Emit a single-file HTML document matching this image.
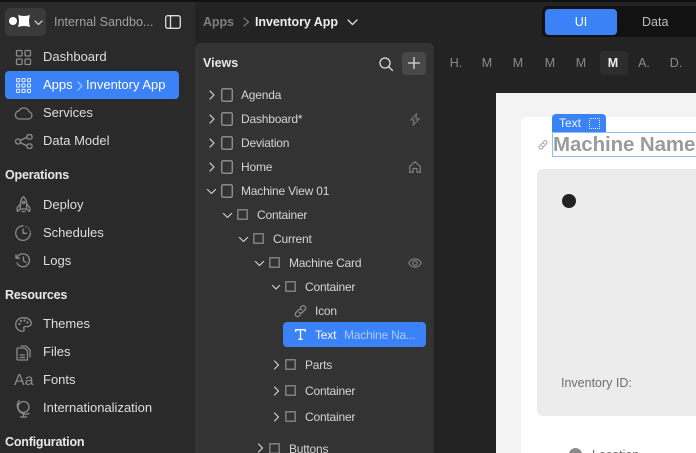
<!DOCTYPE html>
<html><head><meta charset="utf-8"><style>
*{box-sizing:border-box}
html,body{margin:0;padding:0;width:696px;height:453px;overflow:hidden;background:#232323;font-family:"Liberation Sans",sans-serif}
#w{position:absolute;left:0;top:0;width:696px;height:453px;overflow:hidden;background:#232323}
.a{position:absolute}
.t{position:absolute;white-space:nowrap;line-height:16px;font-size:13px;color:#dedede;letter-spacing:0}
.h{font-weight:bold;color:#e8e8e8;font-size:12.5px;letter-spacing:-.2px}
.v{font-size:12px;color:#d4d4d4;letter-spacing:-.2px}
svg{position:absolute;overflow:visible;fill:none;stroke-linecap:round;stroke-linejoin:round}
.i{stroke:#8b8b8b;stroke-width:1.3}
.tab{position:absolute;top:55px;width:30px;text-align:center;font-size:12.5px;line-height:16px;color:#8a8a8a}
</style></head><body><div id="w">
<div class="a" style="left:0;top:0;width:696px;height:2px;background:#111"></div>
<div class="a" style="left:0;top:2px;width:195px;height:451px;background:#2a2a2a"></div>
<div class="a" style="left:195px;top:43px;width:239px;height:410px;background:#333;border-radius:5px 5px 0 0"></div>

<!-- top left -->
<div class="a" style="left:5px;top:8px;width:41px;height:28px;background:#3a3a3a;border-radius:5px"></div>
<div class="a" style="left:9px;top:17px;width:8px;height:8px;border-radius:50%;background:#fff"></div>
<svg style="left:18px;top:15px" width="12" height="12"><path d="M0 0 Q6 2 12 0 Q10 6 12 12 Q6 10 0 12 Q2 6 0 0Z" fill="#fff"/></svg>
<svg style="left:34px;top:20px" width="9" height="6"><path d="M1 1 L4.5 4.5 L8 1" stroke="#ddd" stroke-width="1.2"/></svg>
<div class="t" style="left:54px;top:14px;color:#a0a0a0;font-size:12.5px;letter-spacing:.05px">Internal Sandbo...</div>
<svg style="left:165px;top:15px" width="16" height="14"><rect x=".7" y=".7" width="14.6" height="12.6" rx="2" stroke="#ddd" stroke-width="1.3"/><path d="M5.5 1V13" stroke="#ddd" stroke-width="1.3"/></svg>

<!-- nav -->
<svg class="i" style="left:16px;top:50px" width="15" height="15"><rect x=".5" y=".5" width="5.5" height="5.5" rx="1"/><rect x="9" y=".5" width="5.5" height="5.5" rx="1"/><rect x=".5" y="9" width="5.5" height="5.5" rx="1"/><rect x="9" y="9" width="5.5" height="5.5" rx="1"/></svg>
<div class="t" style="left:43px;top:49px">Dashboard</div>
<div class="a" style="left:5px;top:71px;width:174px;height:28px;background:#3b82f6;border-radius:4px"></div>
<svg style="left:16px;top:78px" width="15" height="15" stroke="#e8f0ff" stroke-width="1"><rect x=".5" y=".5" width="3.2" height="3.2" rx="1"/><rect x="5.9" y=".5" width="3.2" height="3.2" rx="1"/><rect x="11.3" y=".5" width="3.2" height="3.2" rx="1"/><rect x=".5" y="5.9" width="3.2" height="3.2" rx="1"/><rect x="5.9" y="5.9" width="3.2" height="3.2" rx="1"/><rect x="11.3" y="5.9" width="3.2" height="3.2" rx="1"/><rect x=".5" y="11.3" width="3.2" height="3.2" rx="1"/><rect x="5.9" y="11.3" width="3.2" height="3.2" rx="1"/><rect x="11.3" y="11.3" width="3.2" height="3.2" rx="1"/></svg>
<div class="t" style="left:43px;top:77px;color:#fff">Apps</div>
<svg style="left:77px;top:81px" width="6" height="10"><path d="M1 1 L5 5 L1 9" stroke="#a9c9fb" stroke-width="1.2"/></svg>
<div class="t" style="left:86px;top:77px;color:#fff">Inventory App</div>
<svg class="i" style="left:14px;top:106px" width="19" height="14"><path d="M4.5 13 H14.5 A3.7 3.7 0 0 0 15 5.7 A5.5 5.5 0 0 0 5 4.8 A4.2 4.2 0 0 0 4.5 13Z"/></svg>
<div class="t" style="left:43px;top:105px">Services</div>
<svg class="i" style="left:15px;top:134px" width="18" height="15"><circle cx="3" cy="7.5" r="2.5"/><rect x="12" y=".7" width="5" height="4.4" rx="1.5"/><rect x="12" y="10" width="5" height="4.4" rx="1.5"/><path d="M5.3 6.5 L12 3 M5.3 8.5 L12 12"/></svg>
<div class="t" style="left:43px;top:133px">Data Model</div>

<div class="t h" style="left:5px;top:167px">Operations</div>
<svg class="i" style="left:16px;top:196px" width="15" height="17"><path d="M7.5 .8 C4.5 3 4 7 4.3 13 H10.7 C11 7 10.5 3 7.5 .8Z"/><path d="M4.3 8 L1 12 L1.5 15.5 L4.5 13 M10.7 8 L14 12 L13.5 15.5 L10.5 13"/><circle cx="7.5" cy="6.5" r="1.1"/><path d="M6 15.5 H9"/></svg>
<div class="t" style="left:43px;top:197px">Deploy</div>
<svg class="i" style="left:15px;top:225px" width="17" height="16"><path d="M8 .8 A7.3 7.3 0 1 0 15.3 8"/><path d="M8 4 V8.3 H11.5"/><path d="M11 1.5 L11.3 1.7 M13.6 3.3 L13.8 3.6 M15 6 L15.1 6.3"/></svg>
<div class="t" style="left:43px;top:225px">Schedules</div>
<svg class="i" style="left:15px;top:253px" width="16" height="15"><path d="M1.8 5 A6.5 6.5 0 1 1 2 10"/><path d="M1 1.8 V5.200 H4.500"/><path d="M8.5 4 V7.8 L11 9.5"/></svg>
<div class="t" style="left:43px;top:253px">Logs</div>

<div class="t h" style="left:5px;top:287px">Resources</div>
<svg class="i" style="left:15px;top:317px" width="17" height="15"><path d="M8.5 .7 C3.5 .7 .7 4 .7 7.5 C.7 11 3.5 14.3 7.5 14.3 C9.5 14.3 9.3 12.5 8.8 11.5 C8.3 10 9.5 9.3 11 9.500 C14 10 16.3 8.5 16.3 6.5 C16.3 3 13 .7 8.5 .7Z"/><circle cx="4.5" cy="7" r=".5"/><circle cx="6" cy="4" r=".5"/><circle cx="9.5" cy="3.5" r=".5"/><circle cx="12.5" cy="5.5" r=".5"/></svg>
<div class="t" style="left:43px;top:316px">Themes</div>
<svg class="i" style="left:16px;top:345px" width="15" height="16"><path d="M3 3 H8.5 L11.5 6 V15 H2 A1 1 0 0 1 1 14 V4 A1 1 0 0 1 2 3Z"/><path d="M5 1 H10 L14 5 V12"/><path d="M4 10 H8.5 M4 12.5 H8.5"/></svg>
<div class="t" style="left:43px;top:344px">Files</div>
<div class="t" style="left:14px;top:372px;font-size:16px;color:#8b8b8b;letter-spacing:0;line-height:18px">Aa</div>
<div class="t" style="left:43px;top:372px">Fonts</div>
<svg class="i" style="left:15px;top:400px" width="17" height="18"><circle cx="8.500" cy="7" r="5.500"/><path d="M4 .5 A8.500 8.500 0 0 0 14 13.500 M8.500 14 V17 M5.500 17 H11.500"/></svg>
<div class="t" style="left:43px;top:400px">Internationalization</div>
<div class="t h" style="left:5px;top:434px">Configuration</div>

<!-- breadcrumbs -->
<div class="t" style="left:203px;top:14px;color:#7f7f7f;font-weight:bold;font-size:12.5px;letter-spacing:-.1px">Apps</div>
<svg style="left:243px;top:17px" width="7" height="10"><path d="M1 1 L5.5 5 L1 9" stroke="#777" stroke-width="1.2"/></svg>
<div class="t" style="left:255px;top:14px;color:#eee;font-weight:bold;font-size:12.5px;letter-spacing:-.05px">Inventory App</div>
<svg style="left:347px;top:19px" width="11" height="7"><path d="M1 1 L5.5 5.5 L10 1" stroke="#ddd" stroke-width="1.3"/></svg>

<!-- toggle -->
<div class="a" style="left:542px;top:6px;width:154px;height:31px;background:#121212;border-radius:5px 0 0 5px"></div>
<div class="a" style="left:545px;top:9px;width:72px;height:26px;background:#3b82f6;border-radius:4px;color:#fff;font-size:12.5px;line-height:26px;text-align:center">UI</div>
<div class="t" style="left:642px;top:14px;color:#bdbdbd;font-size:12.5px">Data</div>

<!-- tabs -->
<div class="a" style="left:600px;top:51px;width:28px;height:24px;background:#2d2d2d;border-radius:3px"></div>
<div class="tab" style="left:441px">H.</div><div class="tab" style="left:472px">M</div><div class="tab" style="left:503px">M</div><div class="tab" style="left:535px">M</div><div class="tab" style="left:566px">M</div>
<div class="tab" style="left:598px;color:#eee;font-weight:bold">M</div><div class="tab" style="left:629px">A.</div><div class="tab" style="left:661px">D.</div>

<!-- views panel -->
<div class="t h" style="left:203px;top:55px;font-size:12.5px;letter-spacing:0">Views</div>
<svg style="left:379px;top:57px" width="14" height="14" stroke="#ddd" stroke-width="1.3"><circle cx="6" cy="6" r="5"/><path d="M9.7 9.7 L13.5 13.5"/></svg>
<div class="a" style="left:402px;top:52px;width:24px;height:23px;background:#484848;border-radius:4px"></div>
<svg style="left:408px;top:57px" width="12" height="12" stroke="#ddd" stroke-width="1.3"><path d="M6 .5 V11.5 M.5 6 H11.5"/></svg>

<!-- tree -->
<svg style="left:209px;top:91px" width="6" height="96" stroke="#d0d0d0" stroke-width="1.2"><path d="M1 0 L5 4 L1 8 M1 24 L5 28 L1 32 M1 48 L5 52 L1 56 M1 72 L5 76 L1 80"/></svg>
<svg style="left:221px;top:88px" width="12" height="108" stroke="#8a8a8a" stroke-width="1.5"><rect x=".7" y=".7" width="10.6" height="12.6" rx="1.5"/><rect x=".7" y="24.7" width="10.6" height="12.6" rx="1.5"/><rect x=".7" y="48.7" width="10.6" height="12.6" rx="1.5"/><rect x=".7" y="72.7" width="10.6" height="12.6" rx="1.5"/><rect x=".7" y="96.7" width="10.6" height="12.6" rx="1.5"/></svg>
<div class="t v" style="left:241px;top:87px">Agenda</div>
<div class="t v" style="left:241px;top:111px">Dashboard*</div>
<div class="t v" style="left:241px;top:135px">Deviation</div>
<div class="t v" style="left:241px;top:159px">Home</div>
<div class="t v" style="left:241px;top:183px">Machine View 01</div>
<svg class="i" style="left:410px;top:113px;stroke:#6f6f6f" width="10" height="13"><path d="M6.5 .7 L.8 7 H4 L3 12.3 L9.3 5.8 H6 Z"/></svg>
<svg class="i" style="left:409px;top:161px;stroke:#7a7a7a" width="12" height="12"><path d="M.7 5.5 L6 .7 L11.3 5.5 V11.3 H8 V7.5 H4 V11.3 H.7Z"/></svg>
<svg class="i" style="left:408px;top:258px;stroke:#7a7a7a" width="14" height="10"><path d="M.7 5 C3.5 -.5 10.5 -.5 13.300 5 C10.5 10.5 3.5 10.5 .7 5Z"/><circle cx="7" cy="5" r="2.2"/></svg>

<svg style="left:207px;top:189px" width="70" height="76" stroke="#d0d0d0" stroke-width="1.2"><path d="M.5 .5 L4.500 4.500 L8.500 .5 M16.500 24.500 L20.500 28.500 L24.500 24.500 M32.500 48.500 L36.500 52.500 L40.500 48.500 M48.500 72.500 L52.500 76.500 L56.500 72.500"/></svg>
<svg style="left:272px;top:285px" width="8" height="5" stroke="#d0d0d0" stroke-width="1.2"><path d="M.5 .5 L4 4 L7.5 .5"/></svg>
<svg style="left:237px;top:209px;stroke:#808080;stroke-width:1.5" width="60" height="90"><rect x=".8" y=".8" width="9.4" height="9.4"/><rect x="16.8" y="24.8" width="9.4" height="9.4"/><rect x="32.8" y="48.8" width="9.4" height="9.4"/><rect x="48.8" y="72.8" width="9.4" height="9.4"/></svg>
<div class="t v" style="left:257px;top:207px">Container</div>
<div class="t v" style="left:273px;top:231px">Current</div>
<div class="t v" style="left:289px;top:255px">Machine Card</div>
<div class="t v" style="left:305px;top:279px">Container</div>

<svg class="i" style="left:294px;top:305px" width="13" height="12"><path d="M5 7.5 A2.3 2.3 0 0 0 8.3 7.5 L11 4.8 A2.4 2.4 0 0 0 7.6 1.4 L6.5 2.5 M8 4.8 A2.3 2.3 0 0 0 4.7 4.8 L2 7.5 A2.4 2.4 0 0 0 5.4 10.9 L6.5 9.8"/></svg>
<div class="t v" style="left:315px;top:303px">Icon</div>
<div class="a" style="left:283px;top:322px;width:143px;height:25px;background:#3b82f6;border-radius:4px"></div>
<svg style="left:295px;top:329px" width="11" height="11" stroke="#fff" stroke-width="1.3"><path d="M.7 2.5 V.7 H10.3 V2.500 M5.500 .7 V10.300 M3.800 10.300 H7.200"/></svg>
<div class="t v" style="left:315px;top:327px;color:#f0f5ff">Text</div>
<div class="t v" style="left:344px;top:327px;color:#a9cafc">Machine Na...</div>

<svg style="left:274px;top:361px" width="5" height="60" stroke="#d0d0d0" stroke-width="1.2"><path d="M.5 0 L4.5 4 L.5 8 M.5 26 L4.5 30 L.5 34 M.5 52 L4.5 56 L.5 60"/></svg>
<svg style="left:285px;top:359px;stroke:#808080;stroke-width:1.5" width="12" height="64"><rect x=".8" y=".8" width="9.4" height="9.4"/><rect x=".8" y="26.800" width="9.4" height="9.4"/><rect x=".8" y="52.800" width="9.4" height="9.4"/></svg>
<div class="t v" style="left:305px;top:357px">Parts</div>
<div class="t v" style="left:305px;top:383px">Container</div>
<div class="t v" style="left:305px;top:409px">Container</div>
<svg style="left:258px;top:444px" width="5" height="9" stroke="#d0d0d0" stroke-width="1.2"><path d="M.5 0 L4.5 4 L.5 8"/></svg>
<svg style="left:269px;top:443px;stroke:#808080;stroke-width:1.5" width="12" height="12"><rect x=".8" y=".8" width="9.4" height="9.4"/></svg>
<div class="t v" style="left:289px;top:441px">Buttons</div>

<!-- canvas -->
<div class="a" style="left:496px;top:93px;width:200px;height:360px;background:#f3f3f3"></div>
<div class="a" style="left:521px;top:117px;width:175px;height:336px;background:#fff;border-radius:6px 0 0 0"></div>
<div class="a" style="left:537px;top:169px;width:159px;height:247px;background:#ececec;border-radius:5px 0 0 5px"></div>
<div class="a" style="left:562px;top:194px;width:14px;height:14px;border-radius:50%;background:#222"></div>
<div class="t" style="left:561px;top:375px;font-size:12.5px;color:#6f6f6f">Inventory ID:</div>
<div class="a" style="left:569px;top:448px;width:13px;height:13px;border-radius:50%;background:#8a8a8a"></div>
<div class="t" style="left:592px;top:447px;font-size:12.5px;color:#6f6f6f">Location</div>

<svg style="left:538px;top:140px;stroke:#aaa;stroke-width:1.1" width="10" height="10"><path d="M3.8 6 A1.7 1.7 0 0 0 6.3 6 L8.5 3.8 A1.8 1.8 0 0 0 5.9 1.2 L5 2.1 M6.2 3.8 A1.7 1.7 0 0 0 3.7 3.8 L1.5 6 A1.8 1.8 0 0 0 4.1 8.6 L5 7.7"/></svg>
<div class="a" style="left:552px;top:132px;width:150px;height:25px;border:1px solid #8fbdf8"></div>
<div class="t" style="left:553px;top:133px;font-size:20.5px;line-height:24px;font-weight:bold;color:#9b9b9b;letter-spacing:-.1px">Machine Name</div>
<div class="a" style="left:552px;top:114px;width:54px;height:18px;background:#3b82f6;border-radius:4px 4px 0 0"></div>
<div class="t" style="left:559px;top:115px;font-size:12px;color:#f0f5ff">Text</div>
<div class="a" style="left:589px;top:118px;width:11px;height:11px;border:1px dotted #e8f0ff"></div>
</div></body></html>
